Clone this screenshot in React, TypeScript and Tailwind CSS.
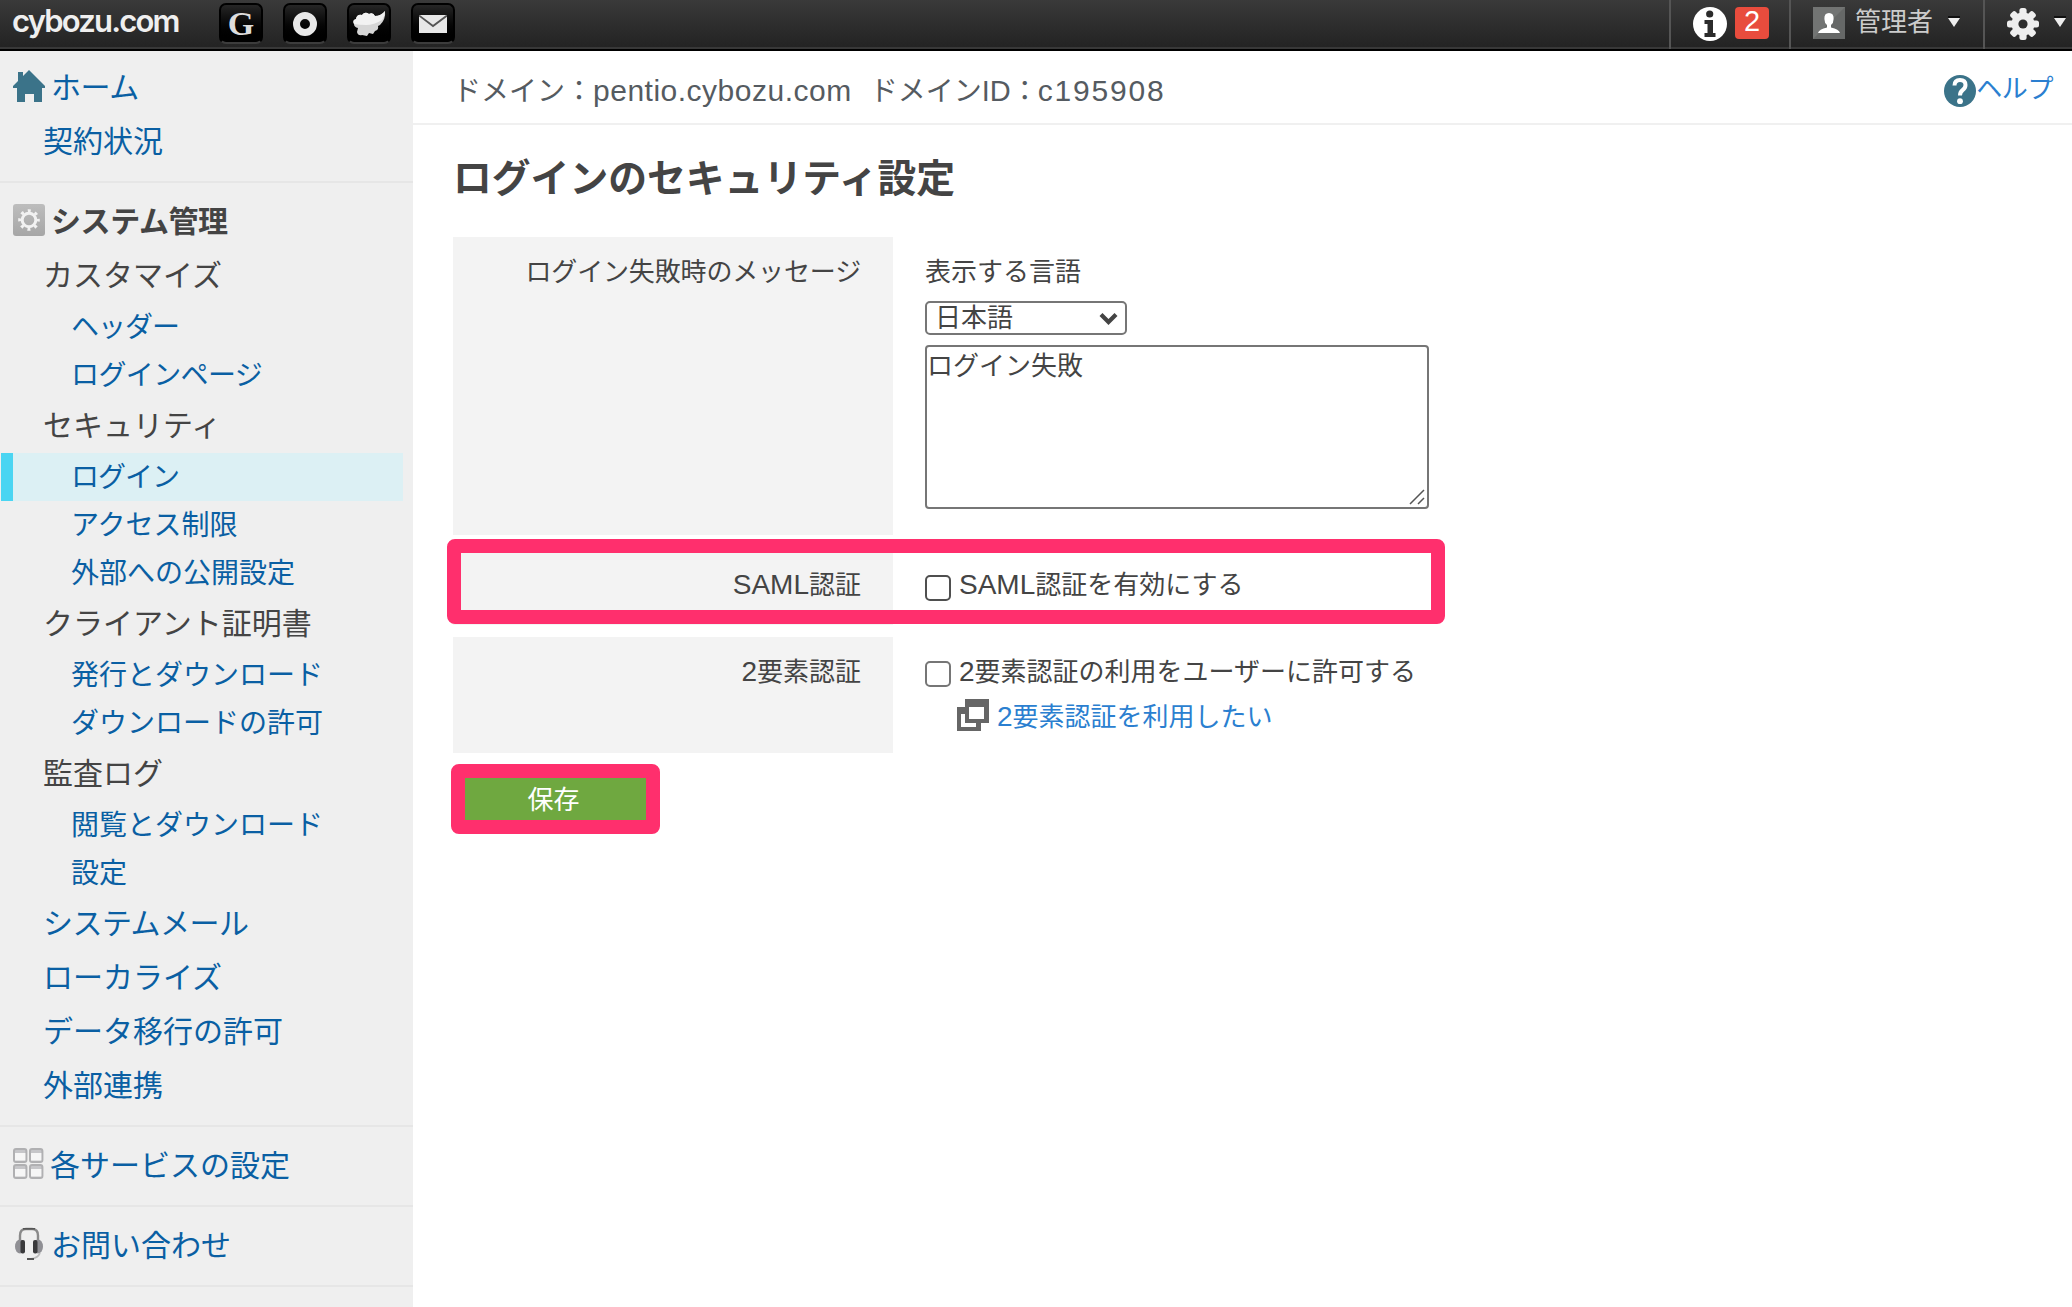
import React from "react";

const NAV_LINK = "text-[#0a5fa3]";

function Row({ children, link = true }: { children: React.ReactNode; link?: boolean }) {
  return (
    <li className={link ? "flex h-[54px] items-center pl-[43px] text-[#0a5fa3]" : "flex h-[54px] items-center pl-[43px] text-[#444]"}>
      {children}
    </li>
  );
}

function Sub({ children, active = false }: { children: React.ReactNode; active?: boolean }) {
  return (
    <li
      className={
        active
          ? "ml-px mr-2.5 flex h-12 items-center border-l-[12px] border-[#4ad5f2] bg-[#dcf0f4] pt-0.5 pl-[58px] text-[28px] text-[#0a5fa3]"
          : "flex h-12 items-center pt-0.5 pl-[71px] text-[28px] text-[#0a5fa3]"
      }
    >
      {children}
    </li>
  );
}

function AppTile({ children }: { children: React.ReactNode }) {
  return (
    <div className="flex h-[41px] w-11 items-center justify-center rounded-[7px] border-2 border-black border-b-[#3c3c3c] bg-linear-to-b from-[#262626] to-black">
      {children}
    </div>
  );
}

function HomeIcon() {
  return (
    <svg width="32" height="32" viewBox="0 0 32 32">
      <path d="M5 2h5v4l6-6 16 16v2h-3v14h-8v-8h-9v8H4V18H0v-2l5-5z" fill="#3b7389" />
    </svg>
  );
}

function SystemIcon() {
  return (
    <svg width="32" height="32" viewBox="0 0 32 32">
      <defs>
        <linearGradient id="sys" x1="0" y1="0" x2="0" y2="1">
          <stop offset="0" stopColor="#bdbdbd" />
          <stop offset="1" stopColor="#a6a6a6" />
        </linearGradient>
      </defs>
      <rect width="32" height="32" rx="3" fill="url(#sys)" />
      <circle cx="16" cy="16" r="9.3" fill="none" stroke="#f2f2f2" strokeWidth="3" strokeDasharray="3 4.304" strokeDashoffset="1.5" />
      <circle cx="16" cy="16" r="6.8" fill="none" stroke="#f2f2f2" strokeWidth="3" />
    </svg>
  );
}

function ServicesIcon() {
  return (
    <svg width="31" height="32" viewBox="0 0 31 32">
      {[[0, 0], [16, 0], [0, 16], [16, 16]].map(([x, y]) => (
        <g key={`${x}-${y}`} transform={`translate(${x} ${y})`}>
          <rect x="1" y="1" width="12.4" height="13" rx="2" fill="#c6c6c9" stroke="#b0b0b2" strokeWidth="2" />
          <rect x="2" y="5" width="10.4" height="7.500" fill="#f6f6f6" />
        </g>
      ))}
    </svg>
  );
}

function HeadsetIcon() {
  return (
    <svg width="32" height="34" viewBox="0 0 32 34">
      <path d="M7 14V8.500Q7 2 13 2h6q6 0 6 6.500V14" fill="none" stroke="#8a8a8a" strokeWidth="2.400" />
      <path d="M10 1.800h12" stroke="#555" strokeWidth="1.600" />
      <ellipse cx="7" cy="19.500" rx="5" ry="7" fill="#8f8f94" />
      <ellipse cx="25" cy="19.500" rx="5" ry="7" fill="#8f8f94" />
      <rect x="7.500" y="13" width="4.500" height="13.500" rx="2" fill="#3a3a3c" />
      <rect x="20" y="13" width="4.500" height="13.500" rx="2" fill="#3a3a3c" />
      <path d="M27 26q-2 5-9 6" fill="none" stroke="#bbb" strokeWidth="1.800" />
      <path d="M14 32h7" stroke="#555" strokeWidth="2" />
    </svg>
  );
}

function Gear() {
  return (
    <svg width="32" height="32" viewBox="0 0 32 32">
      <g fill="#eee">
        {[0, 45, 90, 135].map((a) => (
          <rect key={a} x="12.4" y="0" width="7.200" height="32" rx="2.500" transform={`rotate(${a} 16 16)`} />
        ))}
        <circle cx="16" cy="16" r="11.5" />
      </g>
      <circle cx="16" cy="16" r="4.6" fill="#2c2c2c" />
    </svg>
  );
}

function Caret() {
  return (
    <svg width="12" height="12" viewBox="0 0 12 12">
      <path d="M0 0h12v2H0z" fill="#111" />
      <path d="M0 2h12L6 11z" fill="#eee" />
    </svg>
  );
}

function Header() {
  return (
    <header className="flex h-[51px] shrink-0 items-start justify-between border-b-2 border-black bg-linear-to-b from-[#3a3a3a] to-[#222] shadow-[inset_0_-2px_0_#383838]">
      <div className="flex items-start">
        <div className="h-[48px] w-[219px] pl-3 font-['Inter'] text-[31px] leading-[41px] font-semibold tracking-[-1.8px] text-[#efefef]">
          cybozu.com
        </div>
        <div className="flex gap-5 pt-[3px]">
          <AppTile>
            <span className="font-['Liberation_Serif'] text-[34px] leading-none font-bold text-[#ddd]">G</span>
          </AppTile>
          <AppTile>
            <span className="size-6 rounded-full border-[7px] border-[#e8e8e8]" />
          </AppTile>
          <AppTile>
            <svg width="34" height="28" viewBox="0 0 34 28">
              <path d="M33 1q1 8-5 14l-2 1q1 4-3 5l-2 3-4-1-2 3-5-1q-4 1-5-3l1-4q-4-1-4-4-2-4 2-5 1-5 6-4 3-4 7-1 4-2 6 2 6 0 10-5z" fill="#d6d6d6" />
              <path d="M33 1q0 5-3 9-8 5-16 5-6 0-12-1-2-4 2-5 1-5 6-4 3-4 7-1 4-2 6 2 6 0 10-5z" fill="#f2f2f2" />
            </svg>
          </AppTile>
          <AppTile>
            <svg width="28" height="18" viewBox="0 0 28 18">
              <rect width="28" height="18" fill="#e8e8e8" />
              <path d="M0 0.5 14 11 28 0.5" fill="none" stroke="#555" strokeWidth="1.8" />
            </svg>
          </AppTile>
        </div>
      </div>
      <div className="flex h-[49px] items-start">
        <div className="flex h-full w-[120px] gap-2 border-l-2 border-[#555] pt-[7px] pl-[22px]">
          <svg width="34" height="34" viewBox="0 0 34 34">
            <circle cx="17" cy="17" r="17" fill="#fff" />
            <circle cx="16.7" cy="7" r="3.6" fill="#2b2b2b" />
            <path d="M11.5 13h8.5v13h2.5v4h-11v-4h3v-9h-3z" fill="#2b2b2b" />
          </svg>
          <div className="flex h-8 w-[34px] items-center justify-center rounded-[4px] bg-[#e84c3d] text-[29px] leading-none text-white">
            <span className="-mt-1">2</span>
          </div>
        </div>
        <div className="flex h-full w-[194px] border-l-2 border-[#555] pt-[7px] pl-[22px]">
          <svg width="32" height="32" viewBox="0 0 32 32">
            <rect width="32" height="32" fill="#666867" />
            <path d="M0 0h32L0 32z" fill="#727473" />
            <path d="M16 6q5 0 4.600 6 0 4-2.600 6v2.500q8 1.500 9 5.500H5q1-4 9-5.500V18q-2.600-2-2.600-6Q11 6 16 6z" fill="#fff" />
          </svg>
          <span className="ml-2.5 text-[26px] leading-[30px] text-[#ccc]">管理者</span>
          <span className="mt-[9px] ml-[15px]"><Caret /></span>
        </div>
        <div className="flex h-full w-[89px] border-l-2 border-[#555] pt-2 pl-[22px]">
          <Gear />
          <span className="mt-2 ml-[15px]"><Caret /></span>
        </div>
      </div>
    </header>
  );
}

function Sidebar() {
  return (
    <nav className="w-[413px] shrink-0 bg-[#efefef] text-[30px] leading-none whitespace-nowrap">
      <ul className="border-b-2 border-[#e6e6e6] pt-2.5 pb-3">
        <li className={`flex h-[54px] items-center gap-1.5 pl-[13px] ${NAV_LINK}`}>
          <span className="-mt-1"><HomeIcon /></span>
          <span className="tracking-[-0.4px]">ホーム</span>
        </li>
        <Row>契約状況</Row>
      </ul>
      <ul className="border-b-2 border-[#e6e6e6] py-3">
        <li className="flex h-[54px] items-center gap-1.5 pl-[13px] font-bold text-[#444]">
          <span className="-mt-1"><SystemIcon /></span>
          <span className="tracking-[-0.4px]">システム管理</span>
        </li>
        <Row link={false}>カスタマイズ</Row>
        <Sub><span className="tracking-[-1px]">ヘッダー</span></Sub>
        <Sub><span className="tracking-[-0.6px]">ログインページ</span></Sub>
        <Row link={false}>セキュリティ</Row>
        <Sub active><span className="tracking-[-1px]">ログイン</span></Sub>
        <Sub>アクセス制限</Sub>
        <Sub>外部への公開設定</Sub>
        <Row link={false}>クライアント証明書</Row>
        <Sub>発行とダウンロード</Sub>
        <Sub>ダウンロードの許可</Sub>
        <Row link={false}>監査ログ</Row>
        <Sub>閲覧とダウンロード</Sub>
        <Sub>設定</Sub>
        <Row><span className="tracking-[-0.5px]">システムメール</span></Row>
        <Row>ローカライズ</Row>
        <Row>データ移行の許可</Row>
        <Row>外部連携</Row>
      </ul>
      <div className="border-b-2 border-[#e6e6e6] py-3">
        <div className={`flex h-[54px] items-center gap-1.5 pl-[13px] ${NAV_LINK}`}>
          <span className="-mt-1"><ServicesIcon /></span>
          <span>各サービスの設定</span>
        </div>
      </div>
      <div className="border-b-2 border-[#e6e6e6] py-3">
        <div className={`flex h-[54px] items-center gap-1.5 pl-[13px] ${NAV_LINK}`}>
          <span className="-mt-1"><HeadsetIcon /></span>
          <span>お問い合わせ</span>
        </div>
      </div>
    </nav>
  );
}

function DomainBar() {
  return (
    <div className="flex h-[74px] items-center justify-between border-b-2 border-[#f0f0f0] pt-[7px] pr-5 pl-10 text-[28px] leading-none whitespace-nowrap text-[#555b61]">
      <div className="flex items-baseline">
        <span>ドメイン：</span>
        <span className="text-[30px] tracking-[0.5px]">pentio.cybozu.com</span>
        <span className="ml-[18px]">ドメイン</span>
        <span><span className="text-[29px]">ID</span>：</span>
        <span className="-ml-px text-[30px] tracking-[1.8px]">c195908</span>
      </div>
      <div className="flex items-center text-[26px] text-[#2b7fd0]">
        <svg width="32" height="32" viewBox="0 0 32 32">
          <circle cx="16" cy="16" r="16" fill="#3b7389" />
          <path d="M10.500 10.500q0-5.500 5.500-5.500t5.500 5q0 3-2.800 5-2.700 2-2.700 5.500" fill="none" stroke="#fff" strokeWidth="4" />
          <circle cx="16" cy="26.200" r="2.900" fill="#fff" />
        </svg>
        <span className="-mt-1 -mr-px tracking-[-0.4px]">ヘルプ</span>
      </div>
    </div>
  );
}

function Latin({ children }: { children: React.ReactNode }) {
  return <span className="text-[28px]">{children}</span>;
}

function LabelCell({ children }: { children: React.ReactNode }) {
  return <div className="w-[440px] shrink-0 bg-[#f3f3f3] pt-[22px] pr-8 text-right">{children}</div>;
}

function Settings() {
  return (
    <div className="relative flex flex-col gap-3 pl-10 text-[26px] leading-[26px] whitespace-nowrap text-[#444]">
      <div className="flex h-[298px]">
        <LabelCell><span className="tracking-[-0.15px]">ログイン失敗時のメッセージ</span></LabelCell>
        <div className="flex flex-col items-start pt-[22px] pl-8">
          <span>表示する言語</span>
          <div className="mt-[16px] flex h-[34px] w-[202px] items-center justify-between rounded-[5px] border-2 border-[#767676] pr-[7px] pl-[8px]">
            <span>日本語</span>
            <svg width="19" height="13" viewBox="0 0 19 13">
              <path d="M2 2.500 9.500 10 17 2.500" fill="none" stroke="#444" strokeWidth="4.200" />
            </svg>
          </div>
          <div className="mt-2.5 flex h-[164px] w-[504px] justify-between rounded-[4px] border-2 border-[#767676] pt-1.5">
            <span>ログイン失敗</span>
            <svg className="mr-0.5 mb-0.5 self-end" width="16" height="16" viewBox="0 0 16 16">
              <path d="M1 15 15 1M9 15l6-6" stroke="#555" strokeWidth="1.500" />
            </svg>
          </div>
        </div>
      </div>
      <div className="flex h-[78px]">
        <div className="w-[440px] shrink-0 bg-[#f3f3f3] pt-[25px] pr-8 text-right">
          <Latin>SAML</Latin>認証
        </div>
        <div className="flex items-start pt-[25px] pl-8">
          <span className="mt-[3px] mr-2 size-[26px] rounded-[5px] border-2 border-[#4f4f4f]" />
          <span><Latin>SAML</Latin>認証を有効にする</span>
        </div>
      </div>
      <div className="flex h-[116px]">
        <LabelCell><Latin>2</Latin>要素認証</LabelCell>
        <div className="flex flex-col pt-[22px] pl-8">
          <div className="flex items-start">
            <span className="mt-0.5 mr-2 size-[26px] rounded-[5px] border-2 border-[#767676]" />
            <span><Latin>2</Latin>要素認証の利用をユーザーに許可する</span>
          </div>
          <div className="mt-3 flex items-start gap-2 pl-8 text-[#2b7fd0]">
            <svg width="32" height="32" viewBox="0 0 32 32">
              <path d="M8 0h24v24h-8v8H0V8h8z" fill="#666" />
              <path d="M12 8h15v12H12z" fill="#fff" />
              <path d="M4 15h4v9h11v4H4z" fill="#fff" />
            </svg>
            <span className="pt-[5px]"><Latin>2</Latin>要素認証を利用したい</span>
          </div>
        </div>
      </div>
      <div className="absolute top-[302px] left-[34px] h-[85px] w-[998px] rounded-[8px] border-[14px] border-[#ff2f6d]" />
    </div>
  );
}

export default function App() {
  return (
    <div className="flex h-[1307px] w-[2072px] flex-col overflow-hidden bg-white font-['Liberation_Sans','Noto_Sans_CJK_JP',sans-serif]">
      <Header />
      <div className="flex min-h-0 flex-1">
        <Sidebar />
        <main className="flex min-w-0 flex-1 flex-col">
          <DomainBar />
          <h1 className="h-[112px] pt-[34px] pl-10 text-[38.800px] leading-[40px] font-bold whitespace-nowrap text-[#444]">
            ログインのセキュリティ設定
          </h1>
          <Settings />
          <button className="mt-[11px] ml-[38px] flex h-[70px] w-[209px] items-center justify-center rounded-[8px] border-[14px] border-[#ff2f6d] bg-[#6fa840] pt-px pr-1 text-[26px] leading-none text-white">
            保存
          </button>
        </main>
      </div>
    </div>
  );
}
